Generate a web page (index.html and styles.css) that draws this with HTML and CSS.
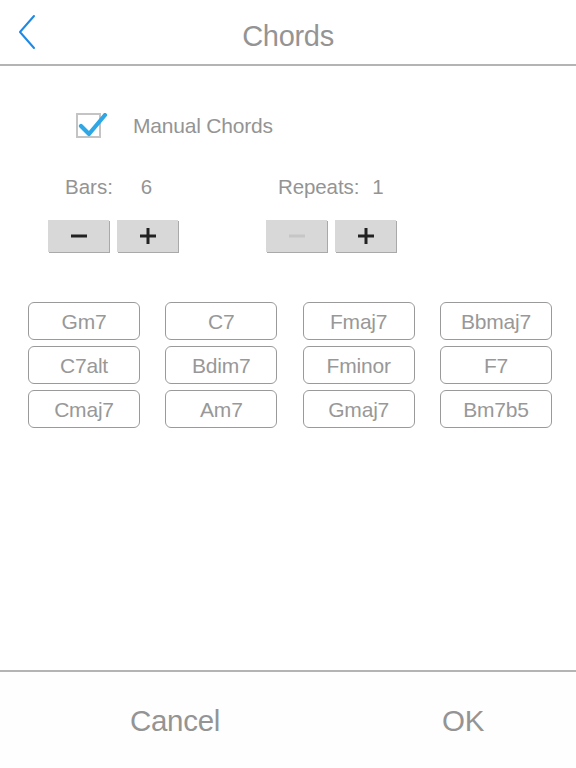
FILE: index.html
```html
<!DOCTYPE html>
<html lang="en">
<head>
<meta charset="utf-8">
<title>Chords</title>
<link rel="stylesheet" href="styles.css">
</head>
<body>
<div class="screen">
  <header class="navbar">
    <button class="back" aria-label="Back">
      <svg width="20" height="36" viewBox="0 0 20 36"><polyline points="16,2 2,18 16,34" fill="none" stroke="#1e88e5" stroke-width="2" stroke-linecap="round" stroke-linejoin="round"/></svg>
    </button>
    <h1 class="title">Chords</h1>
  </header>

  <main class="content">
    <label class="manual">
      <span class="checkbox">
        <svg class="check" width="34" height="26" viewBox="0 0 34 26"><polyline points="5,13 13,21 29,2" fill="none" stroke="#2ea7e6" stroke-width="4.2" stroke-linecap="round" stroke-linejoin="round"/></svg>
      </span>
      <span class="manual-text">Manual Chords</span>
    </label>

    <div class="counters">
      <div class="counter">
        <div class="counter-label bars"><span>Bars:</span><span class="val">6</span></div>
        <div class="steppers">
          <button class="step"><svg width="18" height="18" viewBox="0 0 18 18"><rect x="1" y="7.5" width="16" height="3" fill="#222"/></svg></button>
          <button class="step"><svg width="18" height="18" viewBox="0 0 18 18"><rect x="1" y="7.5" width="16" height="3" fill="#222"/><rect x="7.5" y="1" width="3" height="16" fill="#222"/></svg></button>
        </div>
      </div>
      <div class="counter">
        <div class="counter-label repeats"><span>Repeats:</span><span class="val">1</span></div>
        <div class="steppers">
          <button class="step disabled"><svg width="18" height="18" viewBox="0 0 18 18"><rect x="1" y="7.5" width="16" height="3" fill="#c6c6c6"/></svg></button>
          <button class="step"><svg width="18" height="18" viewBox="0 0 18 18"><rect x="1" y="7.5" width="16" height="3" fill="#222"/><rect x="7.5" y="1" width="3" height="16" fill="#222"/></svg></button>
        </div>
      </div>
    </div>

    <div class="chords">
      <button class="chord">Gm7</button>
      <button class="chord">C7</button>
      <button class="chord">Fmaj7</button>
      <button class="chord">Bbmaj7</button>
      <button class="chord">C7alt</button>
      <button class="chord">Bdim7</button>
      <button class="chord">Fminor</button>
      <button class="chord">F7</button>
      <button class="chord">Cmaj7</button>
      <button class="chord">Am7</button>
      <button class="chord">Gmaj7</button>
      <button class="chord">Bm7b5</button>
    </div>
  </main>

  <footer class="footer">
    <button class="footer-btn">Cancel</button>
    <button class="footer-btn">OK</button>
  </footer>
</div>
</body>
</html>
```

FILE: styles.css
```css
html, body {
  margin: 0;
  padding: 0;
  background: #ffffff;
}

body {
  font-family: "Liberation Sans", Arial, sans-serif;
  color: #949494;
}

button {
  font-family: inherit;
  background: none;
  border: none;
  padding: 0;
  margin: 0;
  cursor: pointer;
}

.screen {
  width: 576px;
  height: 768px;
  display: flex;
  flex-direction: column;
}

.navbar {
  height: 64px;
  border-bottom: 2px solid #b4b4b4;
  display: flex;
  align-items: center;
  justify-content: center;
  position: relative;
}

.back {
  position: absolute;
  left: 18px;
  top: 14px;
  width: 20px;
  height: 36px;
  display: flex;
}

.title {
  margin: 0;
  font-size: 29px;
  font-weight: normal;
  color: #949494;
  letter-spacing: -0.3px;
  padding-top: 8px;
}

.content {
  flex: 1;
  display: flex;
  flex-direction: column;
}

.manual {
  display: flex;
  align-items: center;
  margin-top: 46px;
  margin-left: 76px;
  height: 26px;
}

.checkbox {
  width: 21px;
  height: 21px;
  border: 2px solid #c4c4c4;
  position: relative;
  flex: none;
}

.check {
  position: absolute;
  left: -2px;
  top: -2px;
}

.manual-text {
  margin-left: 32px;
  font-size: 21px;
  letter-spacing: -0.2px;
  padding-top: 2px;
}

.counters {
  display: flex;
  gap: 88px;
  margin-top: 37px;
  margin-left: 48px;
}

.counter {
  display: flex;
  flex-direction: column;
  gap: 21px;
}

.counter-label {
  display: flex;
  height: 24px;
  align-items: center;
  font-size: 20.5px;
}

.counter-label.bars {
  padding-left: 17px;
  gap: 28px;
}

.counter-label.repeats {
  padding-left: 12px;
  gap: 13px;
  letter-spacing: -0.1px;
}

.steppers {
  display: flex;
  gap: 8px;
}

.step {
  width: 61px;
  height: 32px;
  background: #d8d8d8;
  box-shadow: 1px 1px 0 #a9a9a9;
  display: flex;
  align-items: center;
  justify-content: center;
}

.chords {
  display: grid;
  grid-template-columns: repeat(4, 112px);
  column-gap: 25.33px;
  row-gap: 6px;
  margin-top: 50px;
  margin-left: 28px;
}

.chord {
  height: 38px;
  box-sizing: border-box;
  border: 1.5px solid #9a9a9a;
  border-radius: 6px;
  background: #ffffff;
  color: #989898;
  font-size: 21px;
  letter-spacing: -0.2px;
  padding-top: 2px;
}

.footer {
  height: 96px;
  border-top: 2px solid #b4b4b4;
  display: flex;
  background: #fefefe;
}

.footer-btn {
  flex: 1;
  box-sizing: border-box;
  padding-left: 62px;
  padding-top: 2px;
  font-size: 29.5px;
  color: #949494;
  letter-spacing: -0.3px;
}
```
